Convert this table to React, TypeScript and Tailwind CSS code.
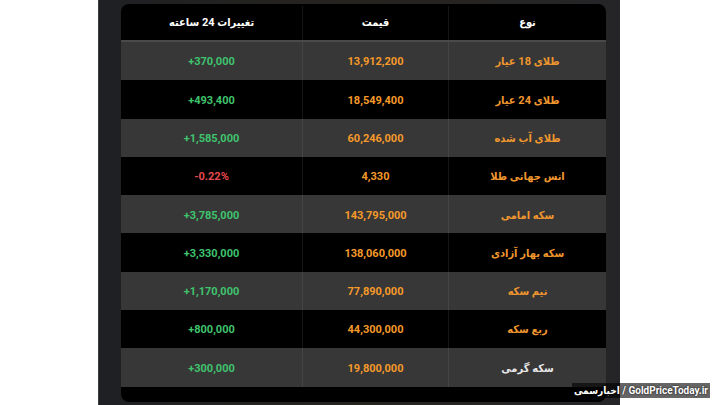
import React from 'react';

type Row = { name: string; price: string; change: string; tone: 'up' | 'down'; nameWhite?: boolean };

const rows: Row[] = [
  { name: 'طلای 18 عیار', price: '13,912,200', change: '+370,000', tone: 'up' },
  { name: 'طلای 24 عیار', price: '18,549,400', change: '+493,400', tone: 'up' },
  { name: 'طلای آب شده', price: '60,246,000', change: '+1,585,000', tone: 'up' },
  { name: 'انس جهانی طلا', price: '4,330', change: '-0.22%', tone: 'down' },
  { name: 'سکه امامی', price: '143,795,000', change: '+3,785,000', tone: 'up' },
  { name: 'سکه بهار آزادی', price: '138,060,000', change: '+3,330,000', tone: 'up' },
  { name: 'نیم سکه', price: '77,890,000', change: '+1,170,000', tone: 'up' },
  { name: 'ربع سکه', price: '44,300,000', change: '+800,000', tone: 'up' },
  { name: 'سکه گرمی', price: '19,800,000', change: '+300,000', tone: 'up', nameWhite: true },
];

const font = { fontFamily: 'Roboto, "DejaVu Sans Condensed", "DejaVu Sans", sans-serif' };

const App = () => {
  return (
    <div className="relative w-[719px] h-[405px] bg-white overflow-hidden" style={font}>
      {/* dark panel */}
      <div className="ml-[98px] w-[522px] h-[405px] border-l border-[#3c3d40] pt-[4px] pl-[22px] pr-[14px] bg-gradient-to-r from-[#1f2023] via-[#26241f] to-[#252528]">
        <div dir="rtl" className="w-[485px] h-[398px] bg-black rounded-[8px] overflow-hidden">
          {/* header */}
          <div className="grid grid-cols-[157px_146px_182px] h-[38px] border-b-[2px] border-[#4a4a4a] text-white text-[11px] font-bold pt-[2px]">
            <div className="flex items-center justify-center">نوع</div>
            <div className="flex items-center justify-center border-r border-[#151515]">قیمت</div>
            <div className="flex items-center justify-center border-r border-[#151515]">تغییرات 24 ساعته</div>
          </div>
          {rows.map((r, i) => (
            <div
              key={r.name}
              className={`grid grid-cols-[157px_146px_182px] h-[38.3px] text-[11px] font-bold ${i % 2 === 0 ? 'bg-[#373737]' : 'bg-black'}`}
            >
              <div className={`flex items-center justify-center pt-[3px] ${r.nameWhite ? 'text-[#e8e8e8]' : 'text-[#f0962e]'}`}>
                {r.name}
              </div>
              <div className={`flex items-center justify-center pt-[3px] border-r ${i % 2 === 0 ? 'border-[#444444]' : 'border-[#161616]'} text-[#f59a2a]`}>
                <span dir="ltr">{r.price}</span>
              </div>
              <div className={`flex items-center justify-center pt-[3px] border-r ${i % 2 === 0 ? 'border-[#444444]' : 'border-[#161616]'} ${r.tone === 'up' ? 'text-[#3fc46e]' : 'text-[#e5484d]'}`}>
                <span dir="ltr">{r.change}</span>
              </div>
            </div>
          ))}
        </div>
      </div>

      {/* watermark */}
      <div className="absolute right-[9px] top-[383px] h-[15px] px-[2px] bg-black/60 flex items-center whitespace-nowrap text-white text-[10px] font-bold leading-none [text-shadow:0_0_2px_#000]">
        <span>اخبارسمی</span>
        <span>&nbsp;/ GoldPriceToday.ir</span>
      </div>
    </div>
  );
};

export default App;
